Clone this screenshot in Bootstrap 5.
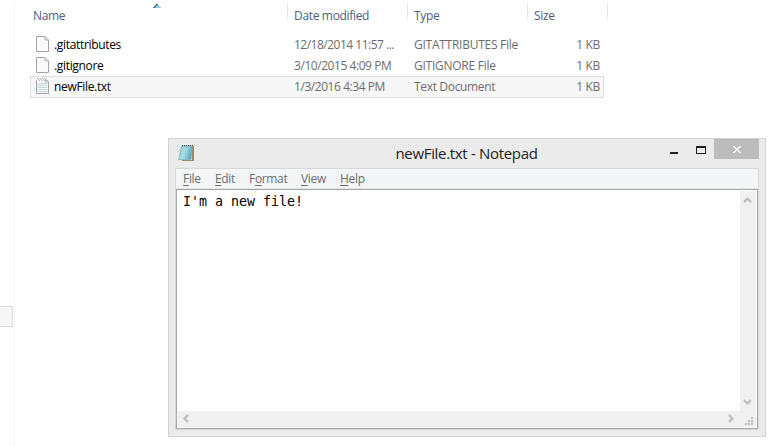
<!DOCTYPE html>
<html lang="en">
<head>
<meta charset="utf-8">
<title>newFile.txt - Notepad</title>
<link href="https://cdn.jsdelivr.net/npm/bootstrap@5.3.0/dist/css/bootstrap.min.css" rel="stylesheet">
<style>
body{width:773px;height:446px;background:#fff;font-family:"Open Sans","Noto Sans",sans-serif;font-size:12px;line-height:20px;color:#6d6d6d}
svg{display:block;flex:none}
.side{width:15px;border-right:1px solid #f3f3f3;margin-top:3px;padding-top:303px}
.side-item{width:13px;height:21px;background:#f6f6f6;border:1px solid #dcdcdc;border-left:0}
.files{width:578px;margin-left:15px}
.grid{display:grid;grid-template-columns:258px 120px 120px 80px}
.heads{height:24px;padding-top:3px;color:#4c607a}
.heads>div{height:20px;line-height:26px;padding-left:6px;border-right:1px solid;border-image:linear-gradient(#e0e6f1,#dfe6f2 60%,#fff) 1;position:relative}
.heads>div:first-child{padding-left:3px}
.sorter{position:absolute;left:123px;top:1px}
.rows{padding-top:10px}
.entry{height:21px;width:574px;border:1px solid transparent;line-height:20px;grid-template-columns:257px 120px 120px 75px}
.entry.chosen{height:22px;background:#f7f7f7;border-color:#dedede}
.entry>div{padding-left:6px}
.entry .fname{color:#000;padding-left:5px}
.entry .fname svg{margin:1px 5px 0 0}
.entry .fsize{padding-right:3px}
.t{display:inline-block;white-space:pre;letter-spacing:-.33px}
.kind{letter-spacing:-.26px}
.when{letter-spacing:-.44px}
.first-when{letter-spacing:-.5px}
.notepad{position:absolute;left:168px;top:138px;width:598px;height:299px;background:#ebebeb;border:1px solid #d3d3d3;padding:0 6px 6px}
.titlebar{height:29px;position:relative}
.titlebar .caption{font-size:15px;line-height:29px;color:#222;position:absolute;left:0;right:1px;text-align:center;letter-spacing:-.32px}
.app-icon{margin:5px 0 0 3px}
.close-btn{width:45px;height:20px;background:#bcbcbc}
.client{height:262px;border:1px solid #d8d8d8;background:#f4f5f7}
.menus{height:20px;padding-left:7px;color:#6d6d6d;line-height:20px;border-bottom:1px solid #e5e6e8}
.menus u{text-underline-offset:2px;text-decoration-thickness:1px}
.m1{width:32px}.m2{width:34px}.m3{width:52px}.m4{width:39px}
.editor{height:240px;background:#fff;border:1px solid #a5a5ab;padding:1px;display:grid;grid-template-columns:562px 16px;grid-template-rows:220px 16px}
.editor>.bar{background:#f0f0f0}
.editor pre{font:13.3px/18px "DejaVu Sans Mono",monospace;color:#000;padding:2px 0 0 5px;letter-spacing:-.01px}
</style>
<script src="https://cdn.jsdelivr.net/npm/bootstrap@5.3.0/dist/js/bootstrap.bundle.min.js"></script>
</head>
<body class="d-flex overflow-hidden position-relative">
<aside class="side flex-shrink-0"><div class="side-item"></div></aside>
<main class="files">
  <div class="grid heads">
    <div><span class="t">Name</span><svg class="sorter" width="8" height="4" shape-rendering="crispEdges"><path d="M3 0h2v1h1v1h1v1h1v1H0V3h1V2h1V1h1z" fill="#9cc9e2"/><path d="M3 0h2v1H3v1H2V1h1zM1 2h1v1H1zM0 3h1v1H0z" fill="#40657f"/><path d="M3 1h1v1H3zM2 2h1v1H2zM1 3h2v1H1z" fill="#6499bb"/></svg></div>
    <div><span class="t">Date modified</span></div>
    <div><span class="t">Type</span></div>
    <div><span class="t">Size</span></div>
  </div>
  <div class="rows">
    <div class="grid entry">
      <div class="fname d-flex align-items-start"><svg width="13" height="16"><path d="M.5.5h8.500l3.500 3.500v11.500H.5z" fill="#fafafa" stroke="#a3a3a3"/><path d="M9 .5V4h3.500" fill="#ddd" stroke="#b5b5b5"/></svg><span class="t">.gitattributes</span></div>
      <div><span class="t first-when">12/18/2014 11:57 ...</span></div><div><span class="t kind">GITATTRIBUTES File</span></div><div class="fsize text-end"><span class="t">1 KB</span></div>
    </div>
    <div class="grid entry">
      <div class="fname d-flex align-items-start"><svg width="13" height="16"><path d="M.5.5h8.500l3.500 3.500v11.500H.5z" fill="#fafafa" stroke="#a3a3a3"/><path d="M9 .5V4h3.500" fill="#ddd" stroke="#b5b5b5"/></svg><span class="t">.gitignore</span></div>
      <div><span class="t when">3/10/2015 4:09 PM</span></div><div><span class="t kind">GITIGNORE File</span></div><div class="fsize text-end"><span class="t">1 KB</span></div>
    </div>
    <div class="grid entry chosen">
      <div class="fname d-flex align-items-start"><svg width="13" height="16"><path d="M.5 2v13.500h12V4L10.500 2" fill="#fafafa" stroke="#a3a3a3"/><path d="M1 .5h9M2 1.500h9M3 2.500h9" stroke="#aaa" stroke-dasharray="1 1.500"/><path d="M9.500 1v3h3" fill="none" stroke="#b5b5b5"/><path d="M2 5.500h9M2 7.500h9M2 9.500h9M2 11.500h9M2 13.500h9" stroke="#c1d5e0"/></svg><span class="t">newFile.txt</span></div>
      <div><span class="t when">1/3/2016 4:34 PM</span></div><div><span class="t">Text Document</span></div><div class="fsize text-end"><span class="t">1 KB</span></div>
    </div>
  </div>
</main>
<section class="notepad">
  <div class="titlebar d-flex justify-content-between">
    <div class="caption">newFile.txt - Notepad</div>
    <svg class="app-icon" width="17" height="18"><defs><linearGradient id="pad" x2="1" y2=".3"><stop stop-color="#8dccd9"/><stop offset=".5" stop-color="#a9dde6"/><stop offset="1" stop-color="#5aa9bc"/></linearGradient></defs><path d="M14 2h2v15H4v-1h10z" fill="#9a8765"/><path d="M3.500 2H14.500L13 15.500H.7z" fill="url(#pad)" stroke="#6faebd" stroke-width=".7"/><path d="M4 1.500h11" stroke="#37474d" stroke-dasharray="1 1"/><path d="M4 2.500h11" stroke="#8fa9b0" stroke-dasharray="1 1"/></svg>
    <div class="d-flex position-relative">
      <svg width="45" height="20" shape-rendering="crispEdges"><path d="M1 13h8v2H1z" fill="#222"/><path d="M27 7h10v8H27zM28 9v5h8V9z" fill="#222" fill-rule="evenodd"/></svg>
      <div class="close-btn"><svg width="45" height="20" shape-rendering="crispEdges"><path d="M19 7h2v1h1v1h2V8h1V7h2v1h-1v1h-1v1h-1v1h1v1h1v1h1v1h-2v-1h-1v-1h-2v1h-1v1h-2v-1h1v-1h1v-1h1v-1h-1V9h-1V8h-1z" fill="#fff"/></svg></div>
    </div>
  </div>
  <div class="client">
    <nav class="menus d-flex"><span class="t m1"><u>F</u>ile</span><span class="t m2"><u>E</u>dit</span><span class="t m3">F<u>o</u>rmat</span><span class="t m4"><u>V</u>iew</span><span class="t m5"><u>H</u>elp</span></nav>
    <div class="editor">
      <pre class="m-0 overflow-hidden">I'm a new file!</pre>
      <div class="bar d-flex flex-column justify-content-between"><svg width="16" height="16"><path d="M4 11 7.500 7.500 11 11" fill="none" stroke="#bcbcbc" stroke-width="2.200"/></svg><svg width="16" height="16"><path d="m4 5 3.500 3.500L11 5" fill="none" stroke="#bcbcbc" stroke-width="2.200"/></svg></div>
      <div class="bar d-flex justify-content-between"><svg width="16" height="16"><path d="M10 4 6.500 7.500 10 11" fill="none" stroke="#bcbcbc" stroke-width="2.200"/></svg><svg width="16" height="16"><path d="m5 4 3.500 3.500L5 11" fill="none" stroke="#bcbcbc" stroke-width="2.200"/></svg></div>
      <div class="bar"><svg width="16" height="16"><path d="M11 6h2v2h-2zM8 9h2v2H8zM11 9h2v2h-2zM5 12h2v2H5zM8 12h2v2H8zM11 12h2v2h-2z" fill="#bcbcbc"/></svg></div>
    </div>
  </div>
</section>
</body>
</html>
